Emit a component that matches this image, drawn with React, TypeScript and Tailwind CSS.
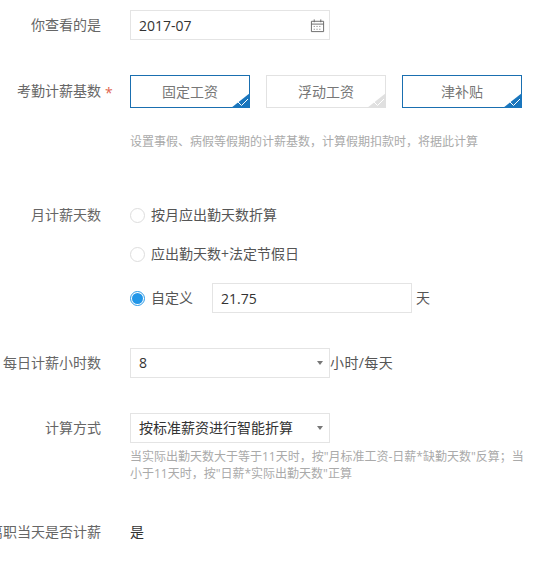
const font = { fontFamily: '"Open Sans", "Noto Sans CJK SC", sans-serif' };

function Label({ text, star }: { text: string; star?: boolean }) {
  return (
    <div
      className={`relative flex w-[101px] shrink-0 items-center justify-end whitespace-nowrap pb-[2px] text-[#666] ${
        star ? "h-[33px]" : "h-[30px]"
      }`}
    >
      <span>{text}</span>
      {star && <span className="absolute left-[105px] top-[7px] text-[#e0644f]">*</span>}
    </div>
  );
}

function Corner({ gray }: { gray?: boolean }) {
  return (
    <svg className="absolute bottom-[-1px] right-[-1px]" width="19" height="15" viewBox="0 0 19 15">
      <path d="M19 0V15H0Z" fill={gray ? "#e0e0e0" : "#1a76bd"} />
      <path d="M7 9L10.5 12.5L17 6" fill="none" stroke="#fff" strokeWidth="1" />
    </svg>
  );
}

function Basis({ text, on }: { text: string; on?: boolean }) {
  return (
    <div
      className={`relative flex h-[33px] w-[120px] items-center justify-center border text-[#777] ${
        on ? "border-[#1a6fb0]" : "border-[#e2e2e2]"
      }`}
    >
      {text}
      <Corner gray={!on} />
    </div>
  );
}

function Radio({ text, on }: { text: string; on?: boolean }) {
  return (
    <div className="flex items-center gap-[6px] text-[#555]">
      <span
        className={`flex h-[15px] w-[15px] items-center justify-center rounded-full border ${
          on ? "border-[#2c9ae6]" : "border-[#ddd]"
        }`}
      >
        {on && <span className="h-[11px] w-[11px] rounded-full bg-[#2196e8]" />}
      </span>
      <span className="pb-[2px]">{text}</span>
    </div>
  );
}

function Select({ value }: { value: string }) {
  return (
    <div className="flex h-[30px] w-[200px] shrink-0 items-center justify-between border border-[#e4e4e4] pl-[8px] pr-[6px] text-[#333]">
      <span className="pb-[2px]">{value}</span>
      <span className="h-0 w-0 border-x-[3px] border-t-[4px] border-x-transparent border-t-[#777]" />
    </div>
  );
}

export default function App() {
  return (
    <div className="h-[576px] w-[541px] overflow-hidden bg-white pt-[10px] text-[14px]" style={font}>
      <div className="flex gap-[29px]">
        <Label text="你查看的是" />
        <div className="flex h-[30px] w-[200px] items-center justify-between border border-[#e4e4e4] pl-[8px] pr-[4px] text-[#333]">
          <span>2017-07</span>
          <svg width="15" height="15" viewBox="0 0 16 16" fill="none" stroke="#666" strokeWidth="1">
            <path d="M1.5 3.5H14.5V14.5H1.5ZM1.5 6.5H14.5M4.5 1.5V4.5M11.5 1.5V4.5" />
            <path d="M4 9H6M7 9H9M10 9H12M4 12H6M7 12H9M10 12H12" strokeDasharray="1 1" />
          </svg>
        </div>
      </div>

      <div className="mt-[35px] flex gap-[29px]">
        <Label text="考勤计薪基数" star />
        <div className="flex gap-4">
          <Basis text="固定工资" on />
          <Basis text="浮动工资" />
          <Basis text="津补贴" on />
        </div>
      </div>
      <p className="ml-[130px] mt-[25px] text-[12px] leading-[18px] text-[#aaa]">
        设置事假、病假等假期的计薪基数，计算假期扣款时，将据此计算
      </p>

      <div className="mt-[49px] flex gap-[29px]">
        <Label text="月计薪天数" />
        <div className="flex flex-col">
          <div className="flex h-[30px] items-center">
            <Radio text="按月应出勤天数折算" />
          </div>
          <div className="mt-[9px] flex h-[30px] items-center">
            <Radio text="应出勤天数+法定节假日" />
          </div>
          <div className="mt-[14px] flex h-[30px] items-center">
            <Radio text="自定义" on />
            <div className="ml-[19px] flex h-[30px] w-[200px] items-center border border-[#e4e4e4] pl-[8px] text-[#333]">
              21.75
            </div>
            <span className="ml-[4px] pb-[2px] text-[#555]">天</span>
          </div>
        </div>
      </div>

      <div className="mt-[35px] flex gap-[29px]">
        <Label text="每日计薪小时数" />
        <Select value="8" />
        <span className="-ml-[29px] flex h-[30px] items-center pb-[2px] tracking-[0.4px] text-[#555]">小时/每天</span>
      </div>

      <div className="mt-[35px] flex gap-[29px]">
        <Label text="计算方式" />
        <div className="w-[400px]">
          <Select value="按标准薪资进行智能折算" />
          <p className="mt-[5px] text-[12px] leading-[17px] text-[#aaa]">
            当实际出勤天数大于等于11天时，按"月标准工资-日薪*缺勤天数"反算；当小于11天时，按"日薪*实际出勤天数"正算
          </p>
        </div>
      </div>

      <div className="mt-[35px] flex gap-[29px]">
        <Label text="离职当天是否计薪" />
        <div className="flex h-[30px] items-center pb-[2px] text-[#333]">是</div>
      </div>
    </div>
  );
}
